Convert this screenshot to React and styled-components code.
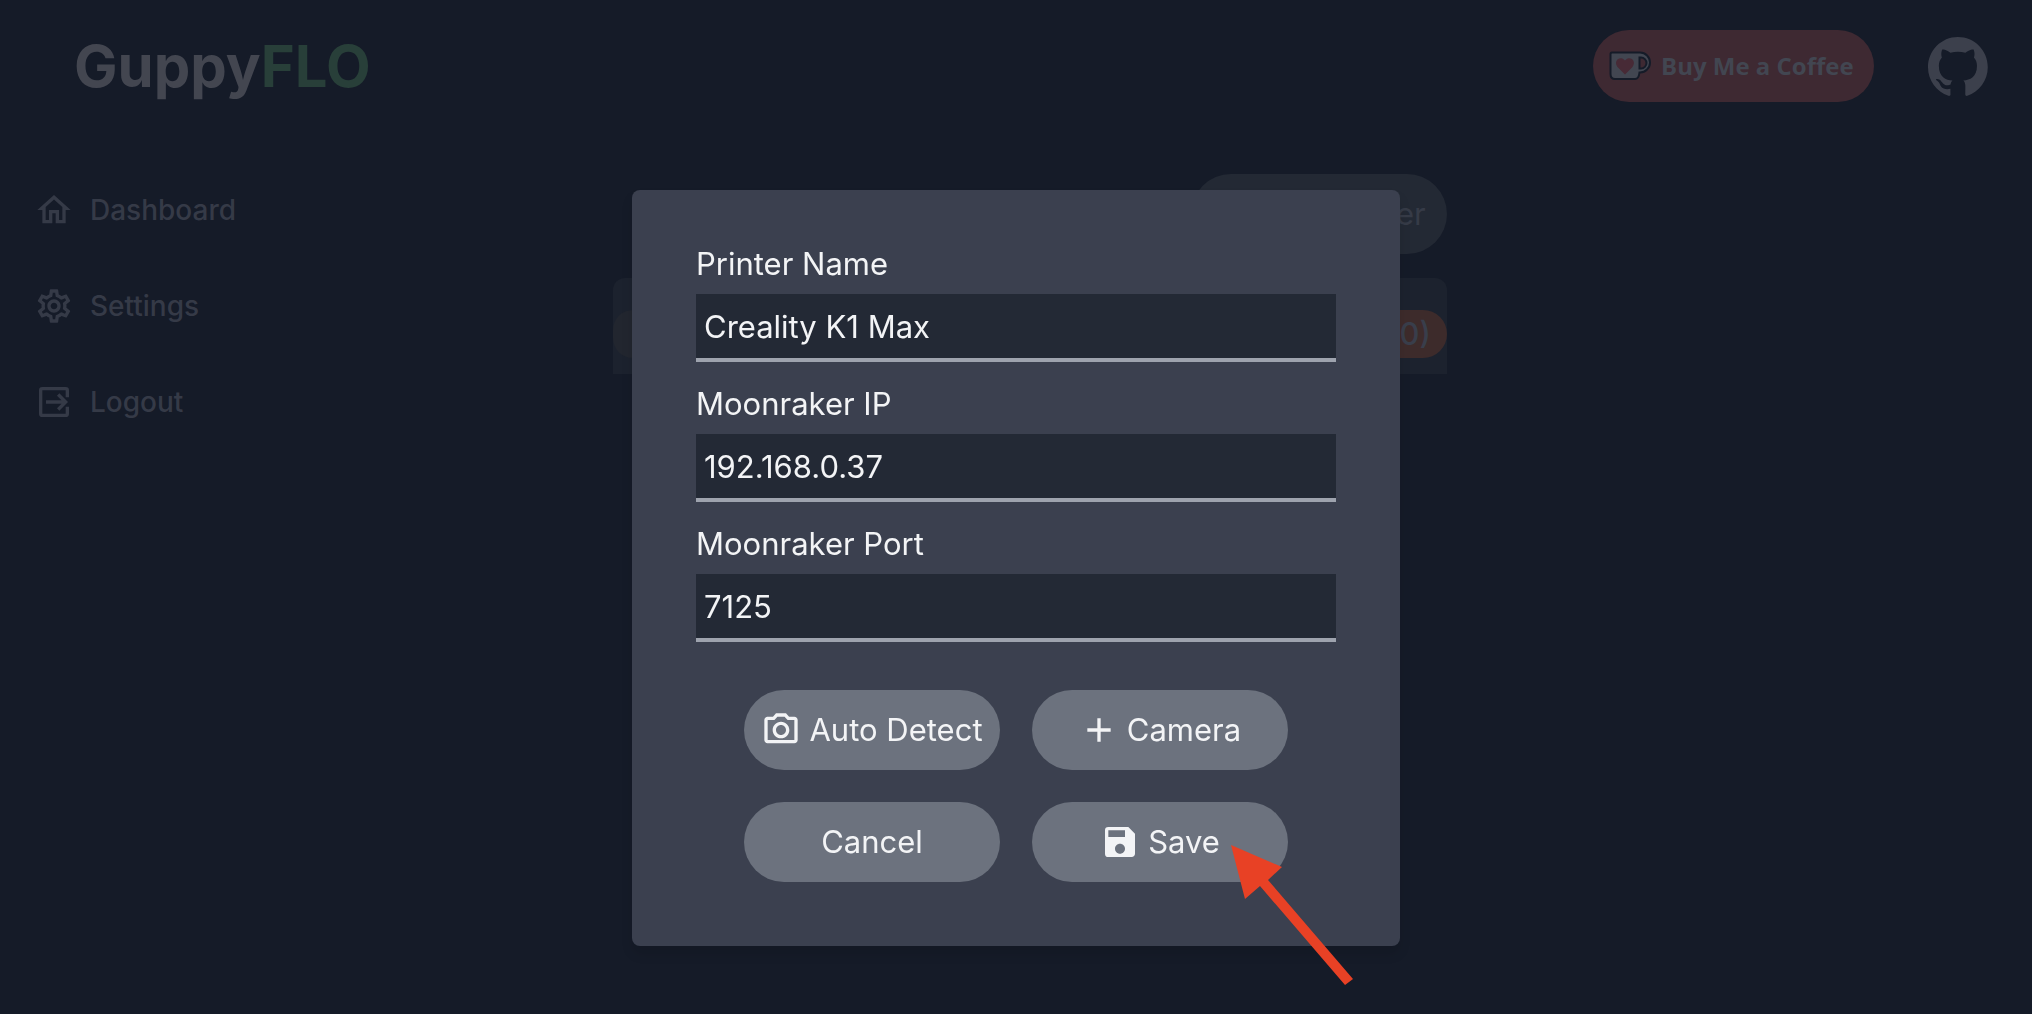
import React from "react";
import styled, { createGlobalStyle } from "styled-components";
import { MdOutlineHome, MdOutlineSettings, MdOutlinePhotoCamera, MdAdd, MdSave } from "react-icons/md";

const GlobalStyle = createGlobalStyle`
  *, *::before, *::after { box-sizing: border-box; }
  body {
    margin: 0;
    background: #151b28;
    font-family: Inter, "Liberation Sans", sans-serif;
    font-size: 31px;
    line-height: 48px;
    color: #353a47;
  }
  a { color: inherit; text-decoration: none; }
  button, input { font: inherit; }
`;

const Page = styled.div`
  min-height: 100vh;
`;

const Header = styled.header`
  display: flex;
  align-items: center;
  justify-content: space-between;
  height: 132px;
  padding: 0 44px 0 74px;
`;

const Brand = styled.h1`
  margin: 0;
  font-size: 58px;
  line-height: 72px;
  font-weight: 700;
  color: #434650;
`;

const BrandAccent = styled.span`
  color: #283f39;
`;

const HeaderLinks = styled.div`
  display: flex;
  align-items: center;
  gap: 54px;
`;

const CoffeeLink = styled.a`
  display: flex;
  align-items: center;
  gap: 8px;
  width: 281px;
  height: 72px;
  padding-left: 16px;
  border-radius: 36px;
  background: #3e2932;
  color: #424651;
  font-family: "Open Sans", sans-serif;
  font-size: 24px;
  font-weight: 700;
  white-space: nowrap;
`;

const GithubLink = styled.a`
  display: flex;
  color: #3c404c;
`;

const Body = styled.div`
  display: grid;
  grid-template-columns: 1fr 834px 1fr;
  align-items: start;
  padding-left: 28px;
`;

const Nav = styled.nav`
  display: grid;
  gap: 48px;
  padding: 54px 0 0 6px;
`;

const NavLink = styled.a`
  display: flex;
  align-items: center;
  gap: 16px;
  font-size: 28px;
  font-weight: 500;
  color: #353a47;
`;

const Main = styled.main`
  display: grid;
  gap: 24px;
  padding-top: 42px;
`;

const PillButton = styled.button`
  display: flex;
  align-items: center;
  justify-content: center;
  gap: 8px;
  width: 256px;
  height: 80px;
  padding: 0;
  border: 0;
  border-radius: 40px;
  background: #6c727e;
  color: #f3f4f6;
  white-space: nowrap;
`;

const AddPrinter = styled(PillButton)`
  justify-self: end;
  background: #232934;
  color: #363b47;
`;

const PrinterCard = styled.section`
  display: flex;
  justify-content: space-between;
  padding: 32px 0 16px;
  border-radius: 12px 12px 0 0;
  background: #1c222e;
`;

const Pill = styled.span`
  height: 48px;
  padding: 0 16px;
  border-radius: 24px;
  font-weight: 500;
  background: ${(p) => (p.$warm ? "#3d2b2b" : "#22262f")};
  color: #393e4b;
`;

const Overlay = styled.div`
  position: fixed;
  inset: 0;
  display: flex;
  align-items: center;
  justify-content: center;
  padding-top: 122px;
`;

const Dialog = styled.form`
  position: relative;
  display: grid;
  gap: 18px;
  width: 768px;
  padding: 50px 64px 64px;
  border-radius: 8px;
  background: #3b404f;
  color: #f3f4f6;
  box-shadow: 0 8px 12px rgba(0, 0, 0, 0.1);
`;

const Field = styled.label`
  display: grid;
  gap: 6px;
`;

const TextInput = styled.input`
  width: 100%;
  height: 68px;
  padding: 0 8px;
  border: 0;
  border-bottom: 4px solid #9ea3ae;
  border-radius: 0;
  outline: 0;
  background: #232935;
  color: #f3f4f6;
`;

const Actions = styled.div`
  display: grid;
  grid-template-columns: auto auto;
  justify-content: center;
  gap: 32px;
  padding-top: 30px;
`;

const Pointer = styled.svg`
  position: absolute;
  left: 599px;
  top: 655px;
  pointer-events: none;
`;

const ExitIcon = () => (
  <svg width="40" height="40" viewBox="0 0 24 24" fill="none" stroke="currentColor" strokeWidth="2" aria-hidden="true">
    <path d="M20 9.200V5a1 1 0 0 0-1-1H5a1 1 0 0 0-1 1v14a1 1 0 0 0 1 1h14a1 1 0 0 0 1-1v-4.200" />
    <path d="M7.200 12H18.500M14.500 7.500L19 12L14.500 16.500" />
  </svg>
);

const CupIcon = () => (
  <svg width="44" height="30" viewBox="0 0 44 30" aria-hidden="true">
    <path d="M3 1.500H31A10 10 0 0 1 31 21.500H30.500C30 26 29 28 26 28H6C3 28 1.500 26 1.500 23V3Q1.500 1.500 3 1.500Z" fill="#424651" stroke="#151b28" strokeWidth="2" />
    <path d="M30.500 6.500H32A5.500 5.500 0 0 1 32 17.500H30.500Z" fill="#3e2932" stroke="#151b28" strokeWidth="2" />
    <path d="M16 23.500L8.500 16C4 10 11 4 16 9.500C21 4 28 10 23.500 16Z" fill="#472a36" />
  </svg>
);

const GithubMark = () => (
  <svg width="60" height="59" viewBox="0 0 98 96" fill="currentColor" aria-hidden="true">
    <path d="M48.854 0C21.839 0 0 22 0 49.217c0 21.756 13.993 40.172 33.405 46.690 2.427.490 3.316-1.059 3.316-2.362 0-1.141-.080-5.052-.080-9.127-13.590 2.934-16.420-5.867-16.420-5.867-2.184-5.704-5.420-7.170-5.420-7.170-4.448-3.015.324-3.015.324-3.015 4.934.326 7.523 5.052 7.523 5.052 4.367 7.496 11.404 5.378 14.235 4.074.404-3.178 1.699-5.378 3.074-6.600-10.839-1.141-22.243-5.378-22.243-24.283 0-5.378 1.940-9.778 5.014-13.200-.485-1.222-2.184-6.275.486-13.038 0 0 4.125-1.304 13.426 5.052a46.970 46.970 0 0 1 12.214-1.630c4.125 0 8.330.571 12.213 1.630 9.302-6.356 13.427-5.052 13.427-5.052 2.670 6.763.970 11.816.485 13.038 3.155 3.422 5.015 7.822 5.015 13.200 0 18.905-11.404 23.060-22.324 24.283 1.780 1.548 3.316 4.481 3.316 9.126 0 6.600-.080 11.897-.080 13.526 0 1.304.890 2.853 3.316 2.364 19.412-6.520 33.405-24.935 33.405-46.691C97.707 22 75.788 0 48.854 0z" />
  </svg>
);

const fields = [
  { name: "printer", label: "Printer Name", value: "Creality K1 Max" },
  { name: "ip", label: "Moonraker IP", value: "192.168.0.37" },
  { name: "port", label: "Moonraker Port", value: "7125" },
];

export default function App() {
  return (
    <Page>
      <GlobalStyle />
      <Header>
        <Brand>Guppy<BrandAccent>FLO</BrandAccent></Brand>
        <HeaderLinks>
          <CoffeeLink href="#coffee"><CupIcon />Buy Me a Coffee</CoffeeLink>
          <GithubLink href="#github" aria-label="GitHub"><GithubMark /></GithubLink>
        </HeaderLinks>
      </Header>
      <Body>
        <Nav>
          <NavLink href="#dashboard"><MdOutlineHome size={40} />Dashboard</NavLink>
          <NavLink href="#settings"><MdOutlineSettings size={40} />Settings</NavLink>
          <NavLink href="#logout"><ExitIcon />Logout</NavLink>
        </Nav>
        <Main>
          <AddPrinter type="button"><MdAdd size={40} />Add Printer</AddPrinter>
          <PrinterCard>
            <Pill>&nbsp;</Pill>
            <Pill $warm>(0)</Pill>
          </PrinterCard>
        </Main>
      </Body>
      <Overlay>
        <Dialog role="dialog" aria-label="Printer" onSubmit={(e) => e.preventDefault()}>
          {fields.map((f) => (
            <Field key={f.name}>
              {f.label}
              <TextInput name={f.name} defaultValue={f.value} />
            </Field>
          ))}
          <Actions>
            <PillButton type="button"><MdOutlinePhotoCamera size={40} />Auto Detect</PillButton>
            <PillButton type="button"><MdAdd size={40} />Camera</PillButton>
            <PillButton type="button">Cancel</PillButton>
            <PillButton type="submit"><MdSave size={40} />Save</PillButton>
          </Actions>
          <Pointer width="122" height="142" viewBox="0 0 122 142" aria-hidden="true">
            <path d="M0 0L51 22L37 35L122 134L114 140L29 41L14 54Z" fill="#e84125" />
          </Pointer>
        </Dialog>
      </Overlay>
    </Page>
  );
}
